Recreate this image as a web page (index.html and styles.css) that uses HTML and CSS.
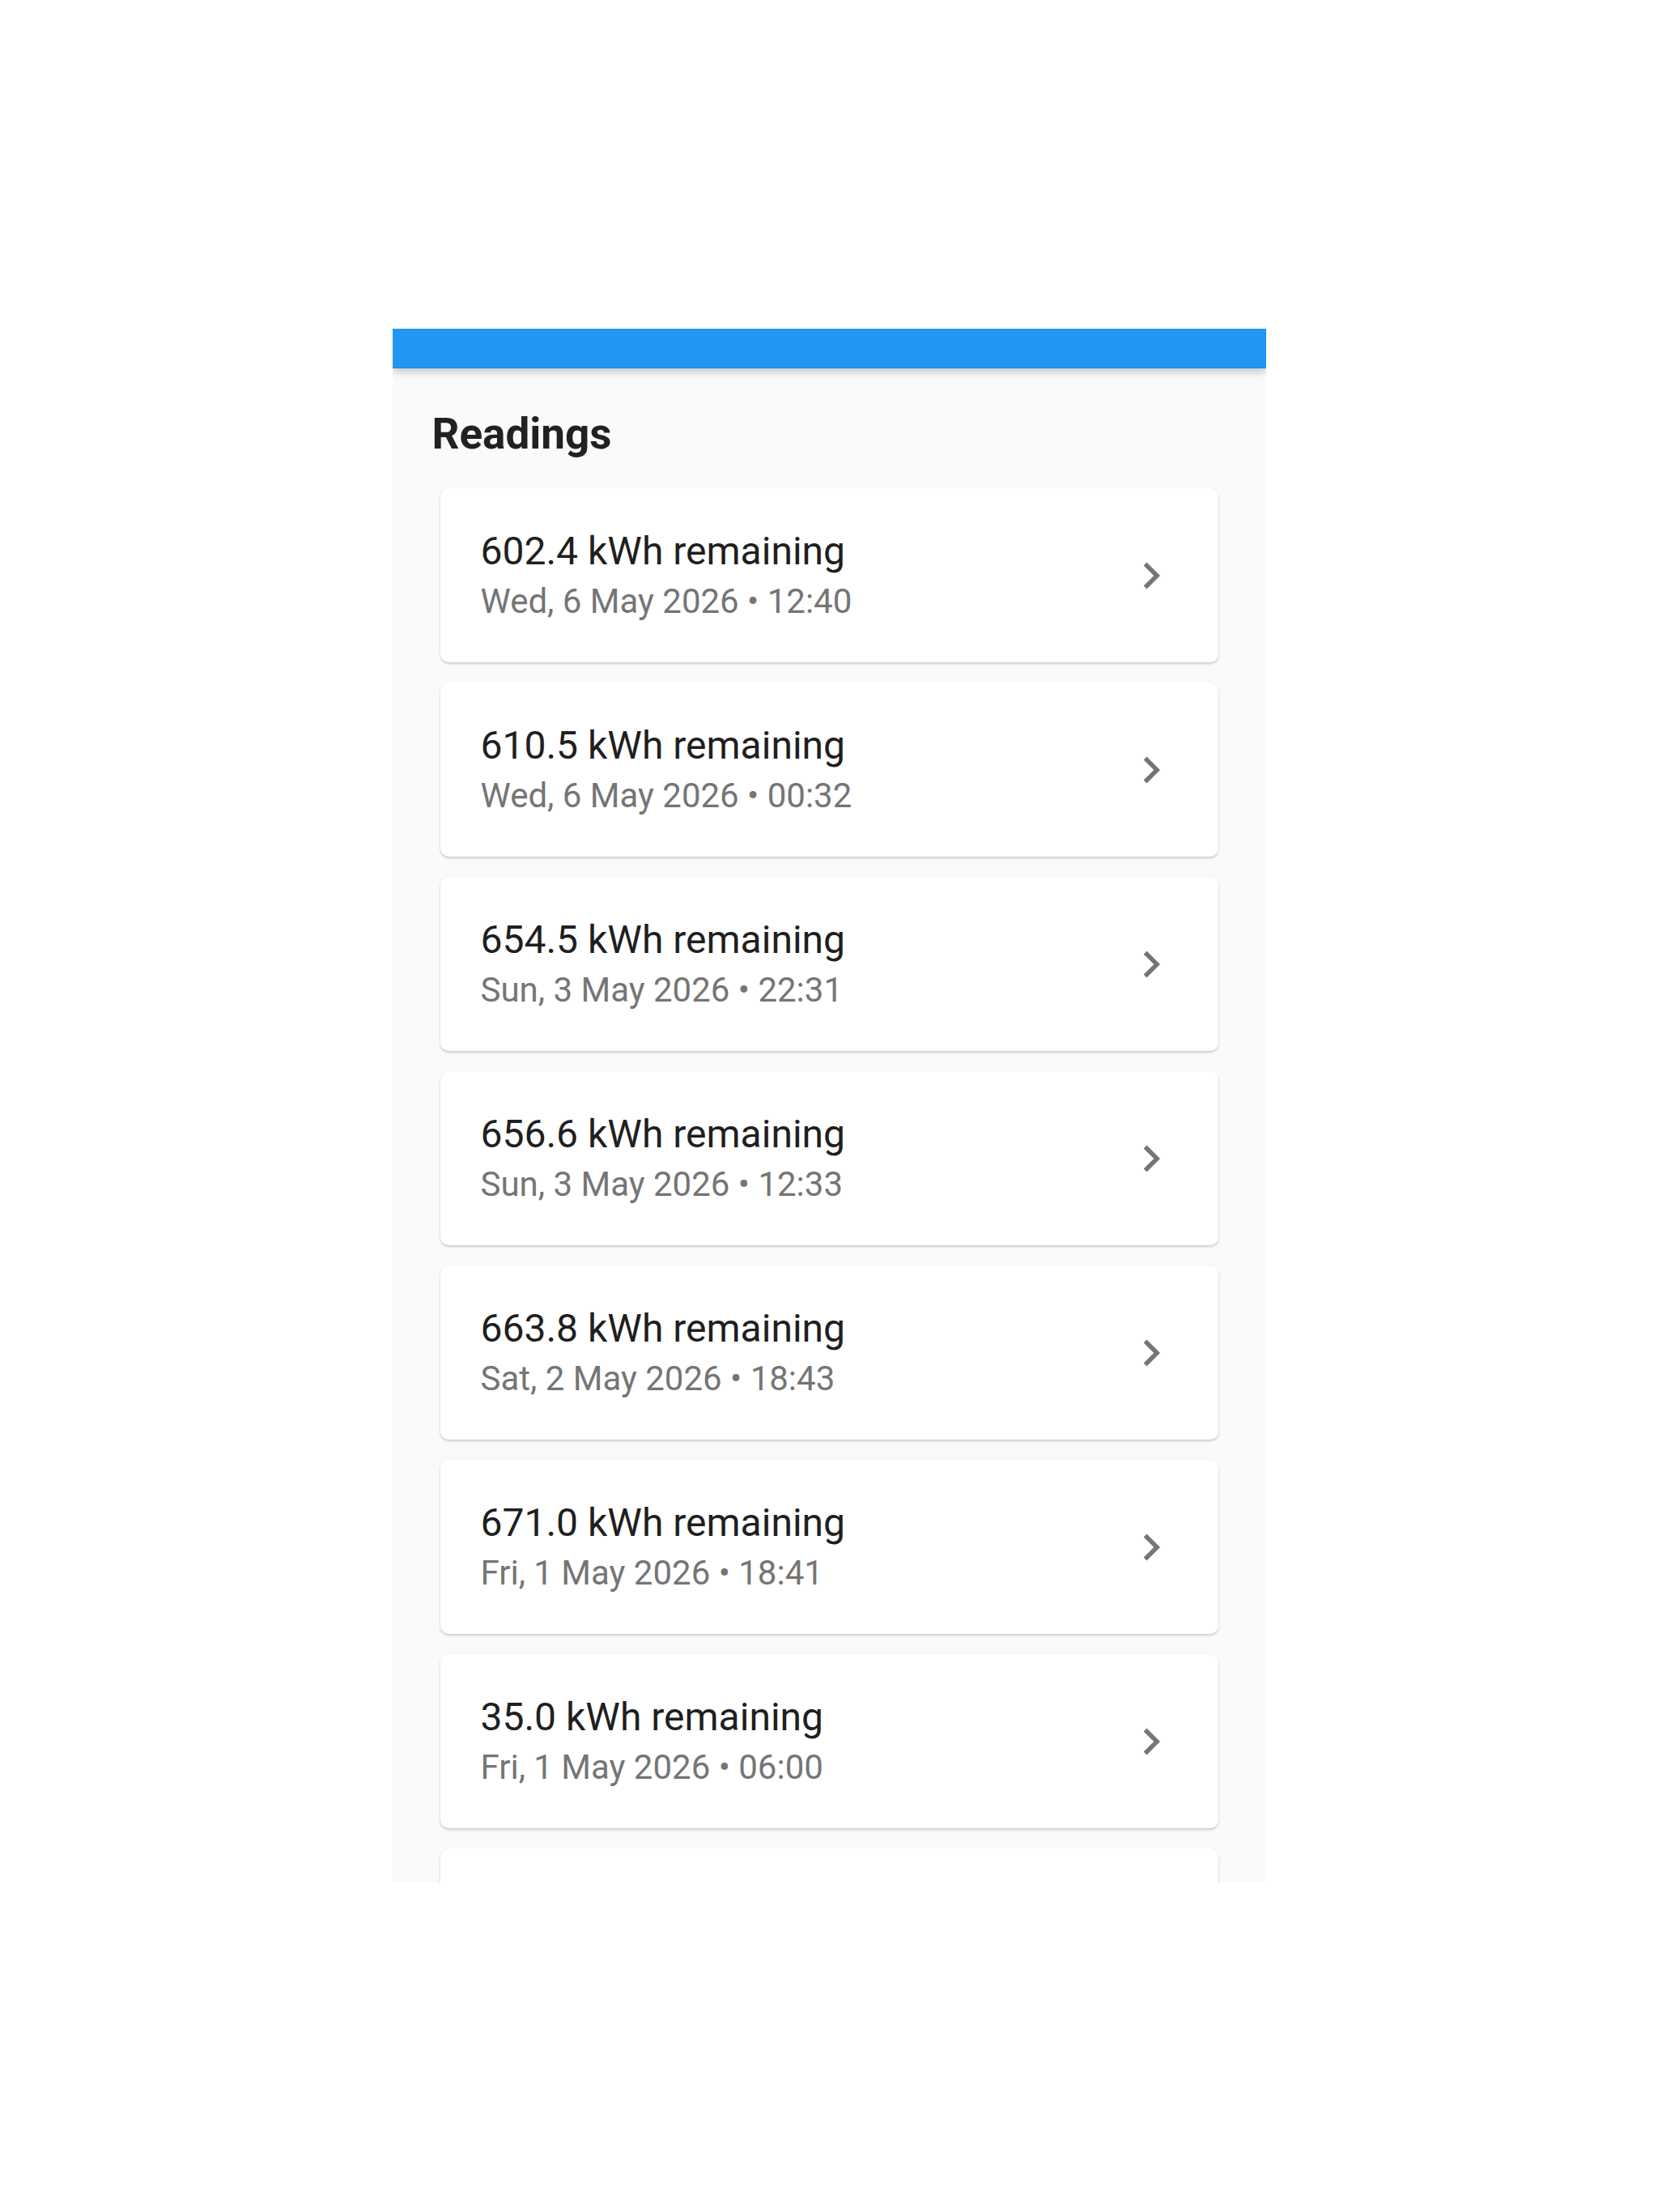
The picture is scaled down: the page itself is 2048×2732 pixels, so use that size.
FILE: index.html
```html
<!DOCTYPE html>
<html lang="en">
<head>
    <meta charset="UTF-8">
    <meta name="viewport" content="width=device-width, initial-scale=1.0">
    <title>Readings</title>
    <link rel="stylesheet" href="styles.css">
</head>
<body>
    <div class="screen">
        <div class="app-bar"></div>

        <div class="content">
            <h2 class="page-title">Readings</h2>

            <div class="reading-list">
                <!-- one card per meter reading, newest first -->
                <div class="reading-card">
                    <div class="reading-text">
                        <div class="reading-value">602.4 kWh remaining</div>
                        <div class="reading-date">Wed, 6 May 2026 • 12:40</div>
                    </div>
                    <svg class="chevron" viewBox="0 0 24 24"><path d="M10 6 8.59 7.41 13.17 12l-4.58 4.59L10 18l6-6z"/></svg>
                </div>
                <div class="reading-card">
                    <div class="reading-text">
                        <div class="reading-value">610.5 kWh remaining</div>
                        <div class="reading-date">Wed, 6 May 2026 • 00:32</div>
                    </div>
                    <svg class="chevron" viewBox="0 0 24 24"><path d="M10 6 8.59 7.41 13.17 12l-4.58 4.59L10 18l6-6z"/></svg>
                </div>
                <div class="reading-card">
                    <div class="reading-text">
                        <div class="reading-value">654.5 kWh remaining</div>
                        <div class="reading-date">Sun, 3 May 2026 • 22:31</div>
                    </div>
                    <svg class="chevron" viewBox="0 0 24 24"><path d="M10 6 8.59 7.41 13.17 12l-4.58 4.59L10 18l6-6z"/></svg>
                </div>
                <div class="reading-card">
                    <div class="reading-text">
                        <div class="reading-value">656.6 kWh remaining</div>
                        <div class="reading-date">Sun, 3 May 2026 • 12:33</div>
                    </div>
                    <svg class="chevron" viewBox="0 0 24 24"><path d="M10 6 8.59 7.41 13.17 12l-4.58 4.59L10 18l6-6z"/></svg>
                </div>
                <div class="reading-card">
                    <div class="reading-text">
                        <div class="reading-value">663.8 kWh remaining</div>
                        <div class="reading-date">Sat, 2 May 2026 • 18:43</div>
                    </div>
                    <svg class="chevron" viewBox="0 0 24 24"><path d="M10 6 8.59 7.41 13.17 12l-4.58 4.59L10 18l6-6z"/></svg>
                </div>
                <div class="reading-card">
                    <div class="reading-text">
                        <div class="reading-value">671.0 kWh remaining</div>
                        <div class="reading-date">Fri, 1 May 2026 • 18:41</div>
                    </div>
                    <svg class="chevron" viewBox="0 0 24 24"><path d="M10 6 8.59 7.41 13.17 12l-4.58 4.59L10 18l6-6z"/></svg>
                </div>
                <div class="reading-card">
                    <div class="reading-text">
                        <div class="reading-value">35.0 kWh remaining</div>
                        <div class="reading-date">Fri, 1 May 2026 • 06:00</div>
                    </div>
                    <svg class="chevron" viewBox="0 0 24 24"><path d="M10 6 8.59 7.41 13.17 12l-4.58 4.59L10 18l6-6z"/></svg>
                </div>
                <div class="reading-card"></div>
            </div>
        </div>
    </div>
</body>
</html>
```

FILE: styles.css
```css
body {
    margin: 0;
    background-color: #fff;
    font-family: Roboto, "Noto Sans", sans-serif;
}
.screen {
    width: 1079px;
    height: 1919px;
    margin: 406px auto 0;
    background-color: #fafafa;
    overflow: hidden;
}
.app-bar {
    position: relative;
    z-index: 1;
    height: 49px;
    background-color: #2196f3;
    border-bottom: 1px solid #1e88e5;
    box-sizing: border-box;
    box-shadow: 0 4px 10px rgba(0, 0, 0, 0.22); /* elevation under the bar */
}
.content {
    padding: 49px 49px 0;
}
.page-title {
    margin: 0 0 35px;
    font-size: 53px;
    line-height: 64px;
    font-weight: 700;
    color: #212121;
}
.reading-list {
    padding: 0 10px;
}
.reading-card {
    display: flex;
    align-items: center;
    height: 215px;
    box-sizing: border-box;
    padding: 0 50px 0 50px;
    margin-bottom: 25px;
    background-color: #fff;
    border-radius: 10px;
    box-shadow: 0 2px 3px rgba(0, 0, 0, 0.18), 0 0 2px rgba(0, 0, 0, 0.06);
}
.reading-text {
    flex: 1;
}
.reading-value {
    font-size: 48px;
    line-height: 60px;
    color: #1f1f1f;
}
.reading-date {
    margin-top: 4px;
    font-size: 42px;
    line-height: 56px;
    color: #757575;
}
.chevron {
    width: 66px;
    height: 66px;
    fill: #757575;
}
```
